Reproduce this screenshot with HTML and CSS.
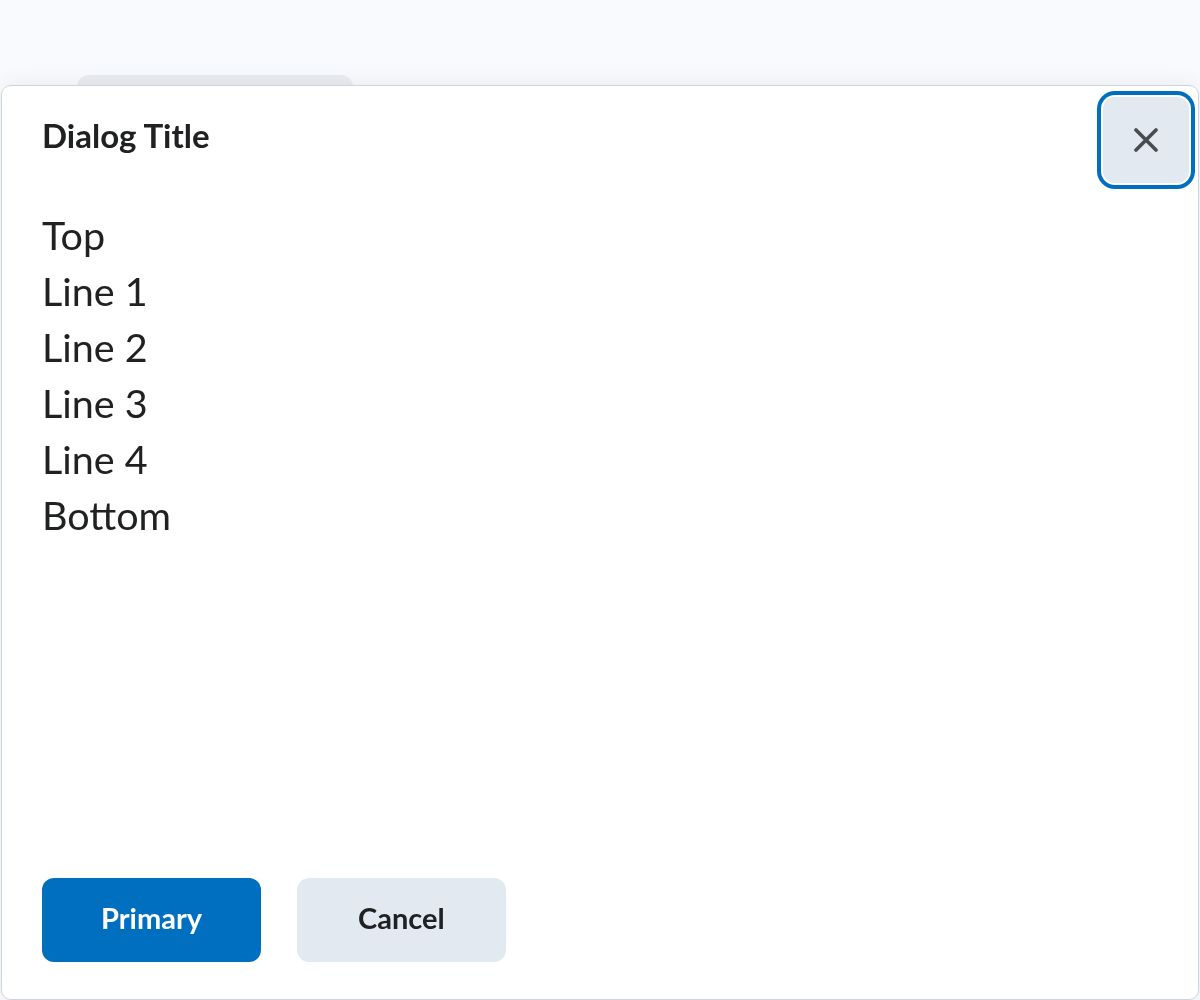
FILE: index.html
```html
<!DOCTYPE html>
<html lang="en">
<head>
<meta charset="utf-8">
<title>Dialog</title>
<link rel="stylesheet" href="styles.css">
</head>
<body>
<div class="page">
  <div class="page-button"></div>
</div>
<div class="dialog" role="dialog" aria-labelledby="dlg-title">
  <div class="dialog-header">
    <h2 class="dialog-title" id="dlg-title">Dialog Title</h2>
    <button class="close-btn" aria-label="Close">
      <svg width="24" height="24" viewBox="0 0 24 24" aria-hidden="true">
        <path d="M2 2 L22 22 M22 2 L2 22" stroke="#494c4e" stroke-width="3.6" stroke-linecap="round" fill="none"/>
      </svg>
    </button>
  </div>
  <div class="dialog-body">
    <div>Top</div>
    <div>Line 1</div>
    <div>Line 2</div>
    <div>Line 3</div>
    <div>Line 4</div>
    <div>Bottom</div>
  </div>
  <div class="dialog-footer">
    <button class="btn btn-primary">Primary</button>
    <button class="btn btn-secondary">Cancel</button>
  </div>
</div>
</body>
</html>
```

FILE: styles.css
```css
html, body {
  margin: 0;
  padding: 0;
  height: 100%;
}
body {
  background: #f9fafd;
  font-family: Lato, "Noto Sans", sans-serif;
  color: #202122;
  overflow: hidden;
}
.page {
  padding: 75px 0 0 77px;
}
.page-button {
  width: 276px;
  height: 84px;
  border-radius: 12px;
  background: #e9ecf0;
}
.dialog {
  position: fixed;
  left: 1px;
  top: 85px;
  width: 1198px;
  height: 915px;
  box-sizing: border-box;
  background: #ffffff;
  border: 1px solid #cdd5dc;
  border-radius: 10px;
  box-shadow: 0 0 24px rgba(32, 33, 34, 0.07);
  display: flex;
  flex-direction: column;
}
.dialog-header {
  display: flex;
  justify-content: space-between;
  align-items: flex-start;
  padding: 0 9px 0 40px;
}
.dialog-title {
  margin: 28px 0 0 0;
  font-size: 33px;
  line-height: 42px;
  font-weight: 700;
  color: #202122;
}
.close-btn {
  margin-top: 11px;
  width: 86px;
  height: 86px;
  border: none;
  border-radius: 12px;
  background: #e3e9f1;
  display: flex;
  align-items: center;
  justify-content: center;
  padding: 0;
  box-shadow: 0 0 0 2px #ffffff, 0 0 0 6px #006fbf;
  cursor: pointer;
}
.close-btn svg {
  display: block;
}
.dialog-body {
  flex: 1;
  padding: 24px 40px 0 40px;
  font-size: 39.5px;
  line-height: 56px;
  color: #202122;
}
.dialog-footer {
  display: flex;
  gap: 36px;
  padding: 0 40px 37px 40px;
}
.btn {
  height: 84px;
  padding: 0 60px 5px 60px;
  border: none;
  border-radius: 12px;
  font-family: Lato, "Noto Sans", sans-serif;
  font-size: 29px;
  font-weight: 700;
  cursor: pointer;
}
.btn-primary {
  background: #006fbf;
  color: #ffffff;
  padding-left: 59px;
  padding-right: 59px;
}
.btn-secondary {
  background: #e3e9f1;
  color: #202122;
  padding-left: 61px;
  padding-right: 61px;
}
```
